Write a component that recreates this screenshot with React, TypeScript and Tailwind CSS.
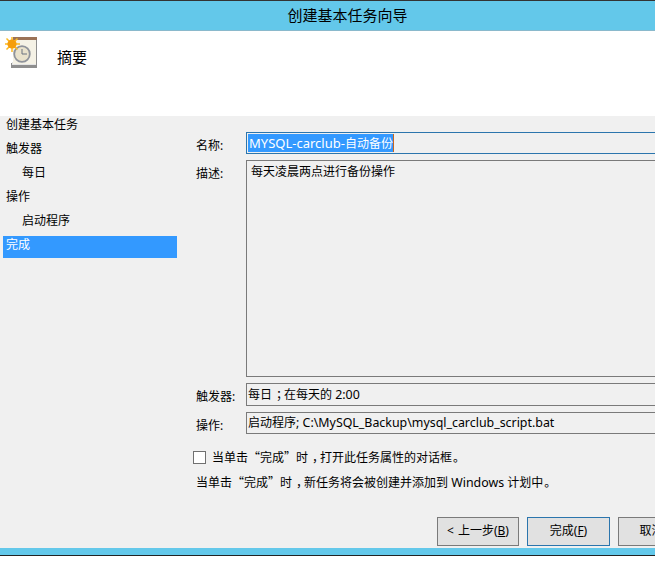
const font = "font-['Noto_Sans','Noto_Sans_CJK_SC',sans-serif]";

const steps = [
  { label: "创建基本任务", indent: false },
  { label: "触发器", indent: false },
  { label: "每日", indent: true },
  { label: "操作", indent: false },
  { label: "启动程序", indent: true },
  { label: "完成", indent: false, active: true },
];

// full-width punctuation sits nearer the middle of its cell in the original font
function Punct({ children }: { children: string }) {
  return <span className="ml-[4px] -mr-[4px]">{children}</span>;
}

function Stop() {
  return <span className="ml-[1px] -mr-[1px]">。</span>;
}

function Quoted() {
  return (
    <span className="font-['Noto_Sans_CJK_SC',sans-serif]">当单击“完成”时</span>
  );
}

function TaskIcon() {
  return (
    <svg width="33" height="33" viewBox="0 0 33 33" className="ml-[5px] mt-[6px] shrink-0">
      <rect x="6" y="26" width="26" height="5" fill="#8e8e8e" />
      <rect x="7" y="25" width="24" height="3" fill="#e4e4e4" />
      <rect x="8" y="2" width="24" height="25" fill="#f5f2e6" />
      <rect x="31" y="2" width="1" height="27" fill="#8e8e8e" />
      <rect x="8" y="0" width="24" height="3" fill="#9b7257" />
      <circle cx="17" cy="17" r="7.8" fill="#e9e2cc" stroke="#8f939b" strokeWidth="1.8" />
      <path d="M17 12V17H22" fill="none" stroke="#6b7280" strokeWidth="1" />
      <path d="M7 -1V15M-1 7H15M1.5 1.5L12.5 12.5M12.5 1.5L1.5 12.5" stroke="#fbb91f" strokeWidth="1.5" />
      <circle cx="7" cy="7" r="4.6" fill="#f59e0b" />
    </svg>
  );
}

export default function App() {
  return (
    <div className={`w-[655px] h-[562px] overflow-hidden bg-white flex flex-col text-[12px] text-black ${font}`}>
      <div className="h-[30px] shrink-0 bg-[#63c8ea] border-t border-[#333333] pl-[40px] flex items-center justify-center text-[15px]">
        创建基本任务向导
      </div>

      <div className="h-[86px] shrink-0 flex border-t border-[#8ab9cc]">
        <TaskIcon />
        <div className="ml-[19px] mt-[16px] text-[15px] leading-5">摘要</div>
      </div>

      <div className="flex-1 flex bg-[#f0f0f0] min-h-0">
        <div className="w-[174px] ml-[3px] shrink-0">
          {steps.map((s) => (
            <div
              key={s.label}
              className={`h-[22px] mb-[2px] leading-[18px] ${s.indent ? "pl-[19px]" : "pl-[3px]"} ${s.active ? "bg-[#3399ff] text-white" : ""}`}
            >
              {s.label}
            </div>
          ))}
        </div>

        <div className="w-[540px] ml-[19px] pt-[16px] shrink-0 flex flex-col">
          <div className="flex">
            <div className="w-[50px] pt-[6px] leading-4 shrink-0">名称:</div>
            <div className="h-[22px] flex-1 border border-[#2b75ad] pt-[1px] pl-[1px]">
              <span className="inline-block h-[18px] leading-[18px] bg-[#3399ff] text-white border-r border-[#c8661e] pl-[1px]">
                <span className="text-[13px]">MYSQL-carclub-</span>自动备份
              </span>
            </div>
          </div>

          <div className="flex mt-[6px]">
            <div className="w-[50px] pt-[6px] leading-4 shrink-0">描述:</div>
            <div className="h-[217px] flex-1 border border-[#7a7a7a] pl-[4px] pt-[3px] leading-4">
              每天凌晨两点进行备份操作
            </div>
          </div>

          <div className="flex mt-[6px]">
            <div className="w-[50px] pt-[6px] leading-4 shrink-0">触发器:</div>
            <div className="h-[23px] flex-1 border border-[#7a7a7a] pl-[1px] leading-[21px] whitespace-nowrap">
              每日<Punct>；</Punct>在每天的 <span className="text-[12.4px]">2:00</span>
            </div>
          </div>

          <div className="flex mt-[6px]">
            <div className="w-[50px] pt-[6px] leading-4 shrink-0">操作:</div>
            <div className="h-[22px] flex-1 border border-[#7a7a7a] pl-[1px] leading-[20px] whitespace-nowrap">
              启动程序<span className="text-[12.4px]">; C:\MySQL_Backup\mysql_carclub_script.bat</span>
            </div>
          </div>

          <div className="flex items-center mt-[15px] -ml-[3px]">
            <span className="w-[13px] h-[13px] border border-[#707070] bg-white shrink-0" />
            <span className="ml-[6px] leading-4 whitespace-nowrap">
              <Quoted />
              <Punct>，</Punct>打开此任务属性的对话框<Stop />
            </span>
          </div>
          <div className="mt-[8px] leading-4 whitespace-nowrap">
            <Quoted />
            <Punct>，</Punct>新任务将会被创建并添加到 <span className="text-[12.4px]">Windows</span> 计划中<Stop />
          </div>

          <div className="flex mt-[26px] ml-[241px] gap-[8px]">
            <button className="w-[82px] h-[29px] pb-[2px] bg-[#e1e1e1] border border-[#7a7a7a] shrink-0">
              &lt;<span className="ml-[4px]">上一步(<span className="underline">B</span>)</span>
            </button>
            <button className="w-[83px] h-[29px] pb-[2px] bg-[#e1e1e1] border border-[#2b75ad] shrink-0">
              完成(<span className="underline">F</span>)
            </button>
            <button className="w-[82px] h-[29px] pb-[2px] bg-[#e1e1e1] border border-[#7a7a7a] shrink-0">
              取消(<span className="underline">C</span>)
            </button>
          </div>
        </div>
      </div>

      <div className="h-[8px] shrink-0 bg-[#63c8ea] border-b border-[#222222]" />
      <div className="h-[6px] shrink-0 bg-white" />
    </div>
  );
}
